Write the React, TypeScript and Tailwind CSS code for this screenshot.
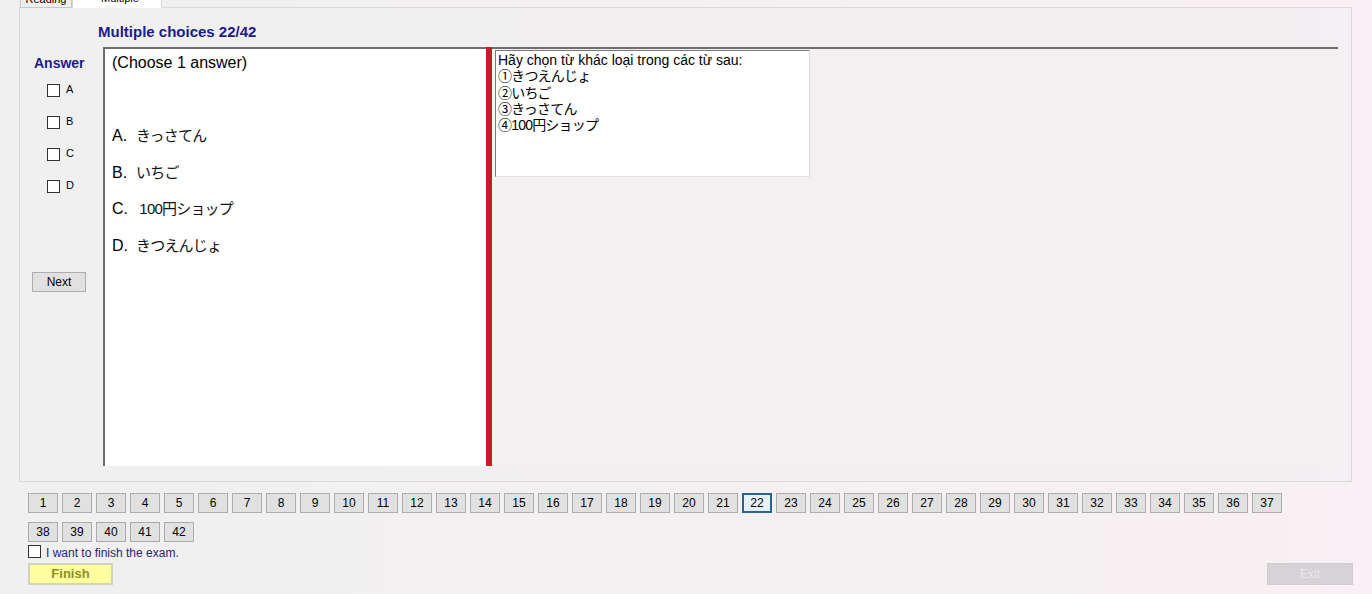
import React from "react";

const options = [
  { key: "A", text: "きっさてん" },
  { key: "B", text: "いちご" },
  { key: "C", text: " 100円ショップ" },
  { key: "D", text: "きつえんじょ" },
];

const passage = [
  "Hãy chọn từ khác loại trong các từ sau:",
  "①きつえんじょ",
  "②いちご",
  "③きっさてん",
  "④100円ショップ",
];

const numbers = Array.from({ length: 42 }, (_, i) => i + 1);

function Box() {
  return <span className="block w-[13px] h-[13px] border border-[#333] bg-white" />;
}

export default function App() {
  const current = 22;
  return (
    <div className="w-[1372px] h-[594px] overflow-hidden bg-gradient-to-r from-[#f0f0f0] to-[#f7f0f4] font-['Liberation_Sans','Noto_Sans_CJK_JP',sans-serif] text-black">
      {/* tab strip, cut off at the top */}
      <div className="h-[7px] flex items-end">
        <div className="flex -mb-px ml-[20px]">
          <div className="w-[52px] h-[20px] border border-[#c8c8c8] bg-[#f0f0f0] text-[11px] leading-[12px] -mt-[13px] overflow-hidden flex items-end justify-center pb-[2px]">
            Reading
          </div>
          <div className="w-[90px] h-[20px] border border-[#d6d6d6] border-b-0 bg-white text-[11px] -mt-[13px] flex items-end pl-[28px] pb-[2px] overflow-hidden">
            Multiple
          </div>
        </div>
      </div>

      {/* tab page */}
      <div className="ml-[19px] w-[1333px] h-[475px] border border-[#dadada] bg-gradient-to-r from-[#f0f0f0] to-[#f4eff2] flex flex-col">
        <div className="pt-[16px] pl-[78px] text-[15px] leading-[16px] font-bold text-[#1c1c8a]">Multiple choices 22/42</div>

        <div className="mt-[7px] flex h-[419px]">
          {/* answer column */}
          <div className="w-[83px] flex flex-col">
            <div className="pt-[8px] pl-[14px] text-[14px] leading-[16px] font-bold text-[#1c1c8a]">Answer</div>
            <div className="pl-[27px] mt-[13px] flex flex-col gap-[19px]">
              {options.map((o) => (
                <div key={o.key} className="flex items-center h-[13px]">
                  <Box />
                  <span className="ml-[6px] text-[11px] leading-[13px] -mt-[3px]">{o.key}</span>
                </div>
              ))}
            </div>
            <button className="mt-[79px] ml-[12px] w-[54px] h-[20px] bg-[#e1e1e1] border border-[#adadad] text-[12px] leading-[18px] text-center">
              Next
            </button>
          </div>

          {/* question */}
          <div className="w-[383px] h-full bg-white border-t-2 border-l-2 border-[#6d6d6d] pl-[7px] pt-[4px] text-[16px] leading-[19px]">
            <div>(Choose 1 answer)</div>
            <div className="mt-[54px] flex flex-col gap-[17.5px]">
              {options.map((o) => (
                <div key={o.key} className="flex">
                  <span className="w-[24px]">{o.key}.</span>
                  <span className="whitespace-pre text-[15px] tracking-[-0.8px] text-[#111]">{o.text}</span>
                </div>
              ))}
            </div>
          </div>

          {/* splitter */}
          <div className="w-[6px] h-full bg-[#c41d27]" />

          {/* passage */}
          <div className="w-[846px] h-full border-t-2 border-[#6d6d6d] bg-[#f4f0f2]">
            <div className="ml-[3px] mt-px w-[315px] h-[127px] bg-white border-t border-l border-[#7a7a7a] border-r border-b border-r-[#e2e2e2] border-b-[#e2e2e2] pl-[2px] pt-px text-[14px] leading-[16.3px]">
              {passage.map((l, i) => (
                <div key={l} className={i > 0 ? "tracking-[-0.8px]" : ""}>
                  {l}
                </div>
              ))}
            </div>
          </div>
        </div>
      </div>

      {/* question navigation */}
      <div className="mt-[11px] pl-[28px] w-[1290px] flex flex-wrap gap-x-[4px] gap-y-[9px]">
        {numbers.map((n) => (
          <button
            key={n}
            className={
              n === current
                ? "w-[30px] h-[20px] bg-[#e5f1fb] border-2 border-[#2a6487] text-[12px] leading-[16px] text-center"
                : "w-[30px] h-[20px] bg-[#e1e1e1] border border-[#adadad] text-[12px] leading-[18px] text-center"
            }
          >
            {n}
          </button>
        ))}
      </div>

      <div className="mt-px pl-[28px] flex items-center">
        <Box />
        <span className="ml-[5px] text-[12px] leading-[14px] text-[#2a2470] mt-[3px]">I want to finish the exam.</span>
      </div>

      <div className="mt-[3px] pl-[28px] pr-[19px] flex justify-between">
        <button className="w-[85px] h-[22px] bg-[#ffff9e] border-2 border-[#d2d2c0] text-[13px] font-bold text-[#8f8f1c] leading-[18px]">
          Finish
        </button>
        <button className="w-[86px] h-[22px] bg-[#d6d2d6] border border-[#d0ccd0] text-[12px] text-[#ece8ec] leading-[20px]">
          Exit
        </button>
      </div>
    </div>
  );
}
